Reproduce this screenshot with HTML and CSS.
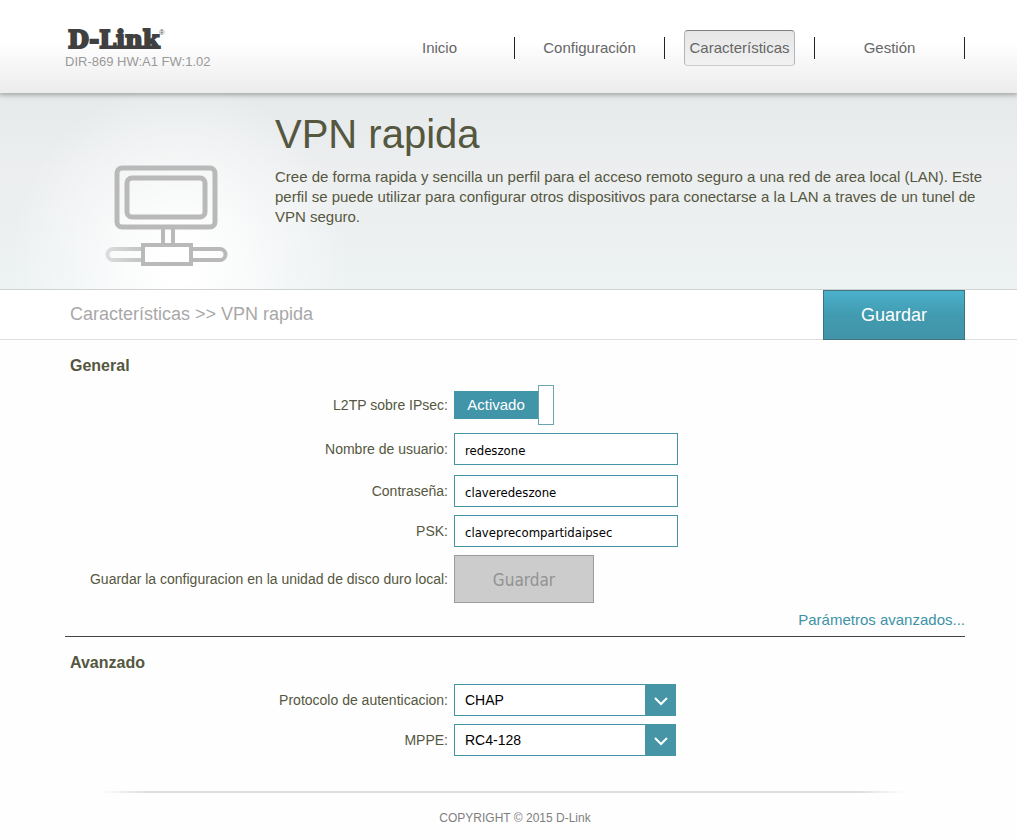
FILE: index.html
```html
<!DOCTYPE html>
<html lang="es">

<head>
    <meta charset="UTF-8">
    <meta name="viewport" content="width=device-width, initial-scale=1.0">
    <title>D-Link - VPN rapida</title>
    <link rel="stylesheet" href="styles.css">
</head>

<body>
    <header class="top">
        <div class="wrap topRow">
            <div class="brand">
                <a href="#" class="logo">D-Link<sup>®</sup></a>
                <span class="version">DIR-869 HW:A1 FW:1.02</span>
            </div>
            <nav>
                <ul class="menu">
                    <li><a href="#">Inicio</a></li>
                    <li><a href="#">Configuración</a></li>
                    <li><a href="#" class="active">Características</a></li>
                    <li><a href="#">Gestión</a></li>
                </ul>
            </nav>
        </div>
    </header>

    <section class="hero">
        <div class="wrap heroRow">
            <!-- Network monitor icon -->
            <svg class="heroIcon" width="124" height="102" viewBox="0 0 124 102" fill="none" stroke-width="5">
                <defs>
                    <linearGradient id="fade" gradientUnits="userSpaceOnUse" x1="0" y1="0" x2="50" y2="0">
                        <stop offset="0" stop-color="#dcdfdf" />
                        <stop offset="1" stop-color="#b9b9b9" />
                    </linearGradient>
                </defs>
                <g stroke="#b9b9b9">
                    <rect x="12" y="3" width="98" height="59" rx="5" />
                    <rect x="22" y="13" width="78" height="39" rx="5" />
                    <path d="M58 62v16M68 62v16" stroke-width="4" />
                    <rect x="38" y="80" width="48" height="19" stroke-width="4" />
                    <path d="M88 84h27a5 5 0 0 1 0 11H88" stroke-width="4" />
                </g>
                <path d="M36 84H8a5 5 0 0 0 0 11h28" stroke="url(#fade)" stroke-width="4" />
            </svg>
            <div class="heroText">
                <h1>VPN rapida</h1>
                <p>Cree de forma rapida y sencilla un perfil para el acceso remoto seguro a una red de area local (LAN). Este perfil se puede utilizar para configurar otros dispositivos para conectarse a la LAN a traves de un tunel de VPN seguro.</p>
            </div>
        </div>
    </section>

    <div class="bar">
        <div class="wrap barRow">
            <span class="crumbs">Características &gt;&gt; VPN rapida</span>
            <button type="submit" form="vpnForm" class="save">Guardar</button>
        </div>
    </div>

    <main class="wrap">
        <form id="vpnForm">
            <!-- General -->
            <section class="general">
                <h2>General</h2>
                <div class="row">
                    <label for="l2tp">L2TP sobre IPsec:</label>
                    <div class="switch">
                        <input type="checkbox" id="l2tp" checked>
                        <span class="switchText">Activado</span>
                        <span class="knob"></span>
                    </div>
                </div>
                <div class="row userRow">
                    <label for="user">Nombre de usuario:</label>
                    <input type="text" id="user" class="text" value="redeszone">
                </div>
                <div class="row">
                    <label for="pass">Contraseña:</label>
                    <input type="text" id="pass" class="text" value="claveredeszone">
                </div>
                <div class="row">
                    <label for="psk">PSK:</label>
                    <input type="text" id="psk" class="text" value="claveprecompartidaipsec">
                </div>
                <div class="row">
                    <label for="saveLocal">Guardar la configuracion en la unidad de disco duro local:</label>
                    <button type="button" id="saveLocal" class="saveLocal" disabled>Guardar</button>
                </div>
                <a href="#advanced" class="more">Parámetros avanzados...</a>
            </section>

            <!-- Avanzado -->
            <section class="advanced" id="advanced">
                <h2>Avanzado</h2>
                <div class="row">
                    <label for="auth">Protocolo de autenticacion:</label>
                    <div class="select">
                        <select id="auth">
                            <option>CHAP</option>
                        </select>
                        <svg class="arrow" viewBox="0 0 31 32"><path d="M10 14l6 6 6-6" /></svg>
                    </div>
                </div>
                <div class="row">
                    <label for="mppe">MPPE:</label>
                    <div class="select">
                        <select id="mppe">
                            <option>RC4-128</option>
                        </select>
                        <svg class="arrow" viewBox="0 0 31 32"><path d="M10 14l6 6 6-6" /></svg>
                    </div>
                </div>
            </section>
        </form>
    </main>

    <footer class="wrap">
        <div class="footLine"></div>
        <p>COPYRIGHT © 2015 D-Link</p>
    </footer>
</body>

</html>
```
FILE: styles.css
```css
* {
    box-sizing: border-box;
}

body {
    margin: 0;
    background-color: #fefefe;
    color: #55573f;
    font-family: "Liberation Sans", Arial, sans-serif;
    font-size: 15px;
}

a {
    text-decoration: none;
}

h1,
h2,
p,
ul {
    margin: 0;
    padding: 0;
}

.wrap {
    padding: 0 52px 0 65px;
}

/* Header */
.top {
    position: relative;
    height: 93px;
    background: linear-gradient(#ffffff 45%, #ececec);
    box-shadow: 0 1px 5px 1px rgba(0, 0, 0, 0.3);
}

.topRow {
    display: flex;
    justify-content: space-between;
}

.brand {
    display: flex;
    flex-direction: column;
    padding-top: 25px;
}

.logo {
    padding-left: 3px;
    color: #404040;
    font-family: "DejaVu Serif", serif;
    font-size: 24px;
    font-weight: bold;
    line-height: 29px;
    -webkit-text-stroke: 2px #404040;
}

.logo sup {
    font-family: "Liberation Sans", Arial, sans-serif;
    font-size: 7px;
    font-weight: normal;
    line-height: 7px;
    vertical-align: 13px;
    -webkit-text-stroke: 0;
}

.version {
    color: #999999;
    font-size: 13px;
    line-height: 16px;
}

.menu {
    display: flex;
    padding-top: 37px;
    list-style: none;
}

.menu li {
    display: flex;
    justify-content: center;
    align-items: center;
    width: 150px;
    height: 22px;
    border-right: 1px solid #222222;
}

.menu a {
    padding: 8px 4px;
    border: 1px solid transparent;
    border-radius: 4px;
    color: #666666;
    line-height: 18px;
}

.menu a.active {
    border-color: #808080 #b4b4b4 #cccccc;
    background: linear-gradient(#e6e6e6, #f2f2f2);
}

/* Title banner */
.hero {
    min-height: 197px;
    border-bottom: 1px solid #d0d3d3;
    background: radial-gradient(ellipse 170px 180px at 180px 170px, #ffffff 10%, rgba(255, 255, 255, 0)), linear-gradient(#e6eaeb, #eceeef 40%, #edf2f3);
}

.heroRow {
    display: flex;
}

.heroIcon {
    flex: none;
    margin: 72px 46px 0 40px;
}

.heroText {
    margin-right: -20px;
    padding-top: 16px;
}

h1 {
    font-size: 40px;
    font-weight: normal;
    line-height: 50px;
}

.heroText p {
    padding-top: 8px;
    line-height: 20px;
}

/* Breadcrumb bar */
.bar {
    border-bottom: 1px solid #dddddd;
    background-color: #ffffff;
}

.barRow {
    display: flex;
    justify-content: space-between;
    align-items: center;
    height: 49px;
}

.crumbs {
    padding-left: 5px;
    color: #a8a8a8;
    font-size: 18px;
}

.save {
    align-self: flex-start;
    width: 142px;
    height: 50px;
    padding: 0;
    border: 1px solid #3f7380;
    background: linear-gradient(#4bb1cc, #419bb0 50%, #4294a8);
    color: white;
    font-family: inherit;
    font-size: 18px;
}

button:hover {
    cursor: pointer;
}

/* Form */
h2 {
    padding-left: 5px;
    font-size: 16px;
    line-height: 20px;
}

.general {
    display: flex;
    flex-direction: column;
    gap: 8px;
    padding: 16px 0 7px;
    border-bottom: 1px solid #444444;
}

.general h2 {
    margin-bottom: 1px;
}

.row {
    display: grid;
    grid-template-columns: 383px 1fr;
    column-gap: 6px;
    align-items: center;
}

.row label {
    font-size: 14px;
    text-align: right;
}

.userRow {
    margin-bottom: 2px;
}

.text {
    width: 224px;
    height: 32px;
    padding: 2px 10px 0;
    border: 1px solid #4595a7;
    background-color: white;
    color: black;
    font-family: Tahoma, "DejaVu Sans Condensed", sans-serif;
    font-size: 13px;
}

.switch {
    position: relative;
    display: flex;
    align-items: center;
    width: 100px;
    height: 40px;
}

.switch input {
    position: absolute;
    width: 100%;
    height: 100%;
    margin: 0;
    opacity: 0;
}

.switchText {
    flex: 1;
    background-color: #4095a9;
    color: white;
    line-height: 28px;
    text-align: center;
}

.knob {
    width: 16px;
    height: 40px;
    border: 1px solid #6ba4b1;
    background-color: white;
}

.saveLocal {
    width: 140px;
    height: 48px;
    padding: 2px 0 0;
    border: 1px solid #979d9d;
    background-color: #cccccc;
    color: #929292;
    font-family: Tahoma, "DejaVu Sans Condensed", sans-serif;
    font-size: 17px;
}

.more {
    align-self: flex-end;
    color: #3d92a6;
    line-height: 18px;
}

.advanced {
    display: flex;
    flex-direction: column;
    gap: 8px;
    padding: 16px 0 35px;
}

.advanced h2 {
    margin-bottom: 3px;
}

.select {
    position: relative;
    width: 222px;
    height: 32px;
}

.select select {
    width: 100%;
    height: 100%;
    padding: 0 40px 0 10px;
    border: 1px solid #4595a7;
    border-radius: 0;
    background-color: white;
    color: black;
    font-family: inherit;
    font-size: 14px;
    appearance: none;
}

.arrow {
    position: absolute;
    top: 0;
    right: 0;
    width: 31px;
    height: 32px;
    background-color: #4595a7;
    fill: none;
    stroke: white;
    stroke-width: 2;
    pointer-events: none;
}

/* Footer */
.footLine {
    height: 2px;
    margin: 0 60px 0 35px;
    background: linear-gradient(to right, transparent, #dddddd 6%, #dddddd 94%, transparent);
}

footer p {
    padding-top: 17px;
    color: #808080;
    font-size: 12px;
    line-height: 16px;
    text-align: center;
}
```
